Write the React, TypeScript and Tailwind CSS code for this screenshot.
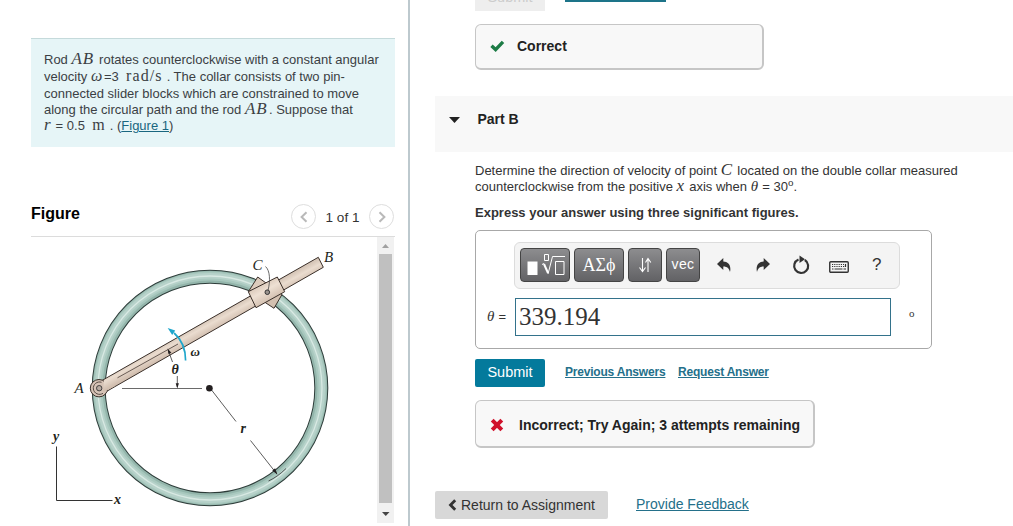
import { type ReactNode } from "react";
import { clsx } from "clsx";

function MathText({ children, className }: { children: ReactNode; className?: string }) {
  return (
    <span className={clsx("inline-block font-['Liberation_Serif'] leading-[10px]", className)}>{children}</span>
  );
}

function Line({ children, className }: { children: ReactNode; className?: string }) {
  return <div className={clsx("whitespace-nowrap", className)}>{children}</div>;
}

function Problem() {
  return (
    <section className="h-[109px] w-[364px] border-t border-[#c5dadb] bg-[#e6f5f7] pt-3 pl-[13px] text-[13px] text-[#3b3f44]">
      <Line className="h-[17px] leading-[17px]">
        Rod <MathText className="w-[24px] text-[17px] tracking-[1px] italic">AB</MathText> rotates counterclockwise with a
        constant angular
      </Line>
      <Line className="h-[18px] leading-[17px]">
        velocity <MathText className="w-[13px] text-[16px] italic">ω</MathText>=3 &nbsp;
        <MathText className="w-[37px] text-[16px] tracking-[1.100px]">rad/s</MathText> . The collar consists of two pin-
      </Line>
      <Line className="h-4 leading-4">connected slider blocks which are constrained to move</Line>
      <Line className="h-4 leading-4">
        along the circular path and the rod{" "}
        <MathText className="w-[24px] text-[17px] tracking-[1px] italic">AB</MathText>. Suppose that
      </Line>
      <Line className="h-4 leading-4">
        <MathText className="w-[8px] text-[17px] italic">r</MathText> = 0.5 &nbsp;
        <MathText className="w-[14px] text-[16px]">m</MathText> . (
        <a className="text-[#19667f] underline">Figure 1</a>)
      </Line>
    </section>
  );
}

function PagerButton({ flip }: { flip?: boolean }) {
  return (
    <button className="flex size-[25px] items-center justify-center rounded-full border border-[#dedede]">
      <svg viewBox="0 0 10 12" className={clsx("h-3 w-2.5", flip && "rotate-180")}>
        <path d="M7.500 1.200 2.600 6l4.900 4.800" fill="none" stroke="#b9b9b9" strokeWidth="2" />
      </svg>
    </button>
  );
}

function Figure() {
  return (
    <svg
      viewBox="31 237 346 289"
      className="h-[289px] w-[346px] font-['Liberation_Serif'] text-[15px] italic"
      fill="#231f20"
    >
      <defs>
        <linearGradient id="rod" gradientUnits="userSpaceOnUse" x1="207" y1="320" x2="213" y2="331">
          <stop offset="0" stopColor="#d6c6b8" />
          <stop offset="0.4" stopColor="#eadccf" />
          <stop offset="1" stopColor="#d2bfb0" />
        </linearGradient>
        <linearGradient id="collar" gradientUnits="userSpaceOnUse" x1="262" y1="284" x2="271" y2="300">
          <stop offset="0" stopColor="#dccbbc" />
          <stop offset="0.4" stopColor="#eee0d3" />
          <stop offset="1" stopColor="#d3c0b0" />
        </linearGradient>
      </defs>

      {/* circular guide */}
      <g fill="none">
        <circle cx="210" cy="388" r="111.300" stroke="#2d3c39" strokeWidth="14" />
        <circle cx="210" cy="388" r="111.300" stroke="#93b5ab" strokeWidth="12" />
        <circle cx="210" cy="388" r="112" stroke="#a8c8be" strokeWidth="9" />
        <circle cx="210" cy="388" r="112.300" stroke="#b7d2ca" strokeWidth="5.500" />
        <circle cx="210" cy="388" r="112" stroke="#d8e9e3" strokeWidth="1.300" />
      </g>

      {/* radius */}
      <g stroke="#333" strokeWidth="0.800">
        <path d="M210 388 236 421.500M250.500 440.500 276.500 473.500" />
        <path d="M268.500 481c6-2.800 12-7 17.500-12.500" fill="none" />
      </g>
      <path d="m277.500 474.800-5.200-4.400 2.800-2.200z" />
      <path d="M122 388.500h80" stroke="#444" strokeWidth="0.800" />
      <circle cx="209.400" cy="388.200" r="3.300" />

      {/* collar block riding on the guide */}
      <path d="M257.700 277 282 294.500 274 308.300 248.500 291.500z" fill="url(#collar)" stroke="#3a2f29" />
      {/* rod */}
      <path
        d="M97 380.200 101.500 380.800 318.300 257.300 323.300 267.300 105 392.300z"
        fill="url(#rod)"
        stroke="#3a2f29"
      />
      <path d="M248.300 291.700 277.300 277 284.700 291.700 256 307.700z" fill="url(#collar)" stroke="#3a2f29" />
      <circle cx="267.300" cy="292.200" r="2.300" fill="#99928d" stroke="#333" />
      <path d="M265.500 266.500c4.500 4 5 14 2.500 24" fill="none" stroke="#444" strokeWidth="0.800" />

      {/* pin at A */}
      <circle cx="99" cy="388.200" r="8.700" fill="#d6c3b6" stroke="#3a2f29" />
      <path d="M104 380.300 112 375.700 115 386 103 392.500z" fill="url(#rod)" />
      <path d="M101.500 382.300a6.200 6.200 0 1 0 1.500 11" fill="none" stroke="#4a3e38" strokeWidth="0.900" />
      <circle cx="99.200" cy="388.200" r="2.700" fill="#b8aaa1" stroke="#333" strokeWidth="0.900" />

      {/* angle marks */}
      <path d="M117.500 377.800 178 344" stroke="#4a3e38" strokeWidth="0.800" />
      <path d="M168.500 351 172.500 362M177.300 376v11" stroke="#333" strokeWidth="0.800" />
      <path d="m167.500 348.500 3.900 4.300-2.900 1.100zM177.300 388.500l-1.600-5.300h3.200z" />
      <path d="M185.600 360.500c0-11-3.600-20.500-11.500-27.500" fill="none" stroke="#1ea6cc" strokeWidth="1.700" />
      <path d="m167.700 328 7.500 2.400-3 4.600z" fill="#1ea6cc" />

      {/* axes */}
      <path d="M56.500 446.500V500.500H112.500" fill="none" stroke="#333" />

      <text x="74.500" y="393">A</text>
      <text x="252.500" y="269.500">C</text>
      <text x="324" y="262">B</text>
      <text x="190.500" y="356" className="text-[13px] font-bold">ω</text>
      <text x="171.500" y="374" className="text-[14px] font-bold">θ</text>
      <text x="240.500" y="433" className="text-[14px] font-bold">r</text>
      <text x="53" y="441" className="text-[14px] font-bold">y</text>
      <text x="114" y="504" className="text-[14px] font-bold">x</text>
    </svg>
  );
}

function Scrollbar() {
  return (
    <div className="flex h-[286px] w-[17px] flex-col items-center justify-between bg-[#f1f1f1]">
      <svg viewBox="0 0 17 17" className="size-[17px] shrink-0">
        <path d="M5 11h7l-3.500-4z" fill="#a0a0a0" />
      </svg>
      <div className="w-[13px] grow bg-[#c0c0c0]" />
      <svg viewBox="0 0 17 20" className="h-5 w-[17px] shrink-0">
        <path d="M5 9h7.500l-3.750 4z" fill="#454545" />
      </svg>
    </div>
  );
}

function KeyButton({ children, className }: { children: ReactNode; className?: string }) {
  return (
    <button
      className={clsx(
        "flex h-[34px] items-center justify-center rounded-[4px] border border-[#444] bg-linear-to-b from-[#8d8d8f] to-[#626265] text-white",
        className
      )}
    >
      {children}
    </button>
  );
}

function CurvedArrow({ className }: { className?: string }) {
  return (
    <svg viewBox="0 0 14 14" className={clsx("size-3.5", className)} fill="#333">
      <path d="M0 6 6.300 0v3.500c5 .2 8.200 3.800 6.700 10.500-.9-3.600-2.500-5.400-6.700-5.500V12z" />
    </svg>
  );
}

function Toolbar() {
  return (
    <div className="ml-[38px] flex h-[47px] w-[386px] items-center rounded-md border border-[#dcdcdc] bg-[#f4f4f4] pb-px pl-[5px] text-[#333]">
      <KeyButton className="w-[50px]">
        <svg viewBox="0 0 50 34" className="h-[34px] w-[50px] shrink-0" fill="none" stroke="#fff">
          <path d="M7.500 13.500h10v13.500h-10z" fill="#fff" stroke="none" />
          <path d="M24.500 6.500h4v6h-4zM35.500 13.500h8.500v13h-8.500z" />
          <path d="M22 16.500 24 15.500" />
          <path d="M24 16 28 25" strokeWidth="2" />
          <path d="M28 26 32.500 8.500H45" />
        </svg>
      </KeyButton>
      <KeyButton className="ml-1 w-[50px]">
        <span className="font-['Liberation_Serif'] text-[18px]">ΑΣϕ</span>
      </KeyButton>
      <KeyButton className="ml-1 w-[34px]">
        <svg viewBox="0 0 14 16" className="h-4 w-3.5" fill="none" stroke="#fff" strokeWidth="1.100">
          <path d="M4.500 1v13M1.500 10.500l3 4 3-4M10 15V2M7.500 5.500 10 1.500l2.800 4" />
        </svg>
      </KeyButton>
      <KeyButton className="ml-1 w-[34px]">
        <span className="pb-0.5 text-[14px] tracking-[0.400px]">vec</span>
      </KeyButton>
      <CurvedArrow className="ml-[17px]" />
      <CurvedArrow className="ml-[25px] -scale-x-100" />
      <svg viewBox="0 0 18 20" className="ml-[22px] h-5 w-[18px]" fill="none" stroke="#333" strokeWidth="2.200">
        <path d="M12.800 5A7 7 0 1 1 6.500 4.500" />
        <path d="M7.500 0.500 13 4.200 7.500 8z" fill="#333" stroke="none" />
      </svg>
      <svg viewBox="0 0 20 12" className="mt-1 ml-[19px] h-3 w-5" stroke="#333">
        <rect x="0.750" y="0.750" width="18.500" height="10.500" rx="1" fill="none" strokeWidth="1.400" />
        <path d="M3 3.500h12M3 5.500h13" strokeDasharray="1.200 1" />
        <path d="M3 8h1.500M5.500 8h8M14.500 8H17M16.500 3v3" strokeWidth="1.200" />
      </svg>
      <span className="ml-[23px] text-[17px]">?</span>
    </div>
  );
}

function ResultBox({ children, className }: { children: ReactNode; className?: string }) {
  return (
    <div
      className={clsx(
        "ml-10 flex items-center rounded-md border border-r-2 border-b-2 border-[#c6c6c6] bg-[#f8f8f8] text-[14px] font-bold whitespace-nowrap text-[#222]",
        className
      )}
    >
      {children}
    </div>
  );
}

export default function App() {
  return (
    <div className="flex h-[526px] w-[1013px] overflow-hidden bg-white font-['Liberation_Sans',Arial,sans-serif] text-[#333]">
      <aside className="h-full w-[410px] shrink-0 border-r-2 border-[#bdc9ce] pt-[38px] pl-[31px]">
        <Problem />
        <div className="mt-14 flex h-[34px] w-[364px] justify-between border-b border-[#dcdcdc]">
          <h2 className="text-[16px] leading-[21px] font-bold text-black">Figure</h2>
          <div className="mt-px mr-px flex h-[25px] items-center text-[13.500px]">
            <PagerButton />
            <span className="w-[53px] pt-[3px] text-center">1 of 1</span>
            <PagerButton flip />
          </div>
        </div>
        <div className="flex">
          <Figure />
          <Scrollbar />
        </div>
      </aside>

      <main className="ml-[25px] flex w-[578px] shrink-0 flex-col">
        <div className="ml-10 flex h-[11px] shrink-0">
          <div className="flex w-[70px] items-end justify-center overflow-hidden bg-[#eee] pb-[5px] text-[14.500px] leading-[17px] text-[#ccc]">
            Submit
          </div>
          <div className="ml-5 h-0.5 w-[101px] bg-[#1d7489]" />
        </div>

        <ResultBox className="mt-[13px] h-[46px] w-[289px] shrink-0 pl-[14px]">
          <svg viewBox="0 0 15 12" className="mb-0.5 h-3 w-[15px]">
            <path d="M1.500 5.800 5.600 9.600 13 1.800" fill="none" stroke="#1d7c46" strokeWidth="3.400" />
          </svg>
          <span className="ml-3">Correct</span>
        </ResultBox>

        <div className="mt-[26px] flex h-14 shrink-0 items-center bg-[#f8f8f8] pb-[9px] pl-3.5 text-[14px] font-bold text-[#222]">
          <svg viewBox="0 0 11 6" className="mt-px h-1.5 w-[11px]">
            <path d="M0 0h11L5.500 6z" fill="#222" />
          </svg>
          <span className="ml-[17.500px]">Part B</span>
        </div>

        <div className="mt-[11px] ml-10 shrink-0 text-[13px]">
          <Line className="h-4 leading-4">
            Determine the direction of velocity of point{" "}
            <MathText className="w-[13px] text-[17px] italic">C</MathText> located on the double collar measured
          </Line>
          <Line className="h-4 leading-4">
            counterclockwise from the positive <MathText className="w-[9px] text-[17px] italic">x</MathText> axis when{" "}
            <MathText className="w-[8px] text-[15px] italic">θ</MathText> = 30
            <span className="relative -top-[5px] font-['Liberation_Serif'] text-[11px] leading-none">o</span>.
          </Line>
          <Line className="mt-2.5 h-4 leading-4 font-bold">Express your answer using three significant figures.</Line>
        </div>

        <div className="mt-[9px] ml-10 h-[119px] w-[457px] shrink-0 rounded-[5px] border border-[#a8a8a8] pt-[11px]">
          <Toolbar />
          <div className="mt-[9px] flex items-center">
            <label className="w-[39px] pl-[11px] text-[13px] whitespace-nowrap">
              <MathText className="w-[8px] text-[15px] italic">θ</MathText> =
            </label>
            <div className="flex h-[38px] w-[376px] items-center border border-[#33728b] pl-[3px] font-['Liberation_Serif'] text-[25px]">
              339.194
            </div>
            <span className="ml-[18px] pb-2 font-['Liberation_Serif'] text-[11px]">o</span>
          </div>
        </div>

        <div className="mt-2.5 ml-10 flex h-7 shrink-0 text-[12px] font-bold tracking-[-0.200px] text-[#24708a]">
          <button className="w-[70px] rounded-[2px] bg-[#047a9c] text-[14.500px] font-normal tracking-normal text-white">
            Submit
          </button>
          <a className="ml-5 w-[101px] pt-1 whitespace-nowrap underline">Previous Answers</a>
          <a className="ml-3 pt-1 whitespace-nowrap underline">Request Answer</a>
        </div>

        <ResultBox className="mt-[13px] h-12 w-[340px] shrink-0 pt-[3px] pl-3.5">
          <svg viewBox="0 0 14 14" className="mb-px size-3.5">
            <path d="M2.200 2.200 11.800 11.800M11.800 2.200 2.200 11.800" stroke="#d0112b" strokeWidth="4" />
          </svg>
          <span className="ml-[15px]">Incorrect; Try Again; 3 attempts remaining</span>
        </ResultBox>

        <div className="mt-[43px] flex h-7 shrink-0 items-center">
          <button className="flex h-7 w-[173px] items-center rounded-[2px] bg-[#d8d8d8] pl-[13px] text-[14px] whitespace-nowrap">
            <svg viewBox="0 0 9 12" className="h-3 w-[9px]">
              <path d="M7.200 1.200 2.500 6l4.700 4.800" fill="none" stroke="#333" strokeWidth="2.800" />
            </svg>
            <span className="ml-1">Return to Assignment</span>
          </button>
          <a className="ml-7 pb-0.5 text-[14px] whitespace-nowrap text-[#24708a] underline">Provide Feedback</a>
        </div>
      </main>
    </div>
  );
}
